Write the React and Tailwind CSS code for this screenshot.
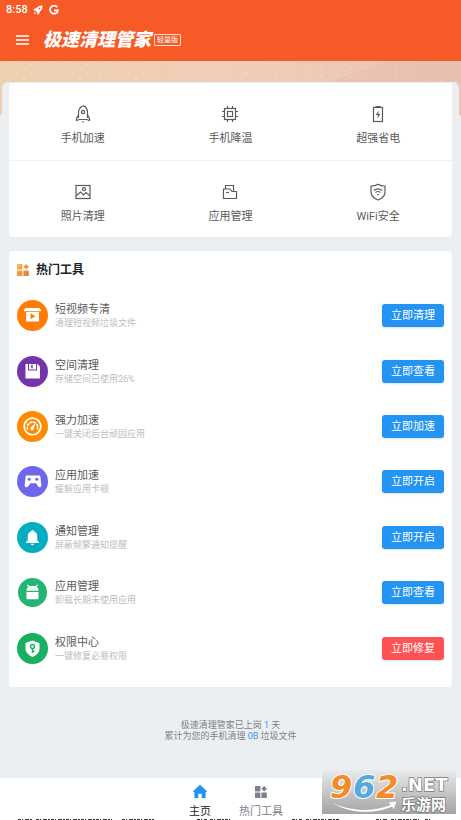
import React from 'react';

const RocketOutline = () => (
  <>
    <path d="M4.500 13V7.500C4.500 4.500 6.500 1.500 9 1s4.500 3.500 4.500 6.500V13" />
    <path d="M4.500 10 2.500 13.500v2l3-1h7l3 1v-2l-2-3.500" />
    <circle cx="9" cy="7" r="1.600" />
    <path d="M9 16.300v1.500" />
  </>
);

const ChipOutline = () => (
  <>
    <rect x="3.500" y="3.500" width="11" height="11" />
    <rect x="6.500" y="6.500" width="5" height="5" />
    <path d="M6.500 1v2.500M11.500 1v2.500M6.500 14.500V17M11.500 14.500V17M1 6.500h2.500M1 11.500h2.500M14.500 6.500H17M14.500 11.500H17" />
  </>
);

const BatteryOutline = () => (
  <>
    <rect x="4.500" y="2.500" width="9" height="14" />
    <path d="M6.500 1.500h5" />
    <path d="M9.500 5.800 6.800 10h2l-.3 3.200 2.800-4.200h-2z" fill="currentColor" stroke="none" />
  </>
);

const PhotoOutline = () => (
  <>
    <rect x="2" y="2.500" width="14" height="13" />
    <circle cx="10" cy="6.200" r="1.500" />
    <path d="m2.500 12.500 4-3.500 3 3 2.500-2.500 3.500 3" />
  </>
);

const FolderOutline = () => (
  <>
    <path d="M2.500 6v9.500h13V8.500H11L9 6z" />
    <path d="M4.500 6V2.500h8v6M5 9.500h3" />
  </>
);

const WifiShieldOutline = () => (
  <>
    <path d="M9 1.200c2 1.300 4.300 1.800 7 1.800v6c0 3.800-3 6.500-7 8-4-1.500-7-4.200-7-8V3c2.700 0 5-.5 7-1.800z" />
    <path d="M4.800 7.500c2.500-2 5.900-2 8.400 0M6.500 9.500c1.500-1.200 3.500-1.200 5 0" />
    <path d="M7.800 11h2.400L9 12.800z" fill="currentColor" stroke="none" />
  </>
);

const features = [
  { label: '手机加速', Icon: RocketOutline },
  { label: '手机降温', Icon: ChipOutline },
  { label: '超强省电', Icon: BatteryOutline },
  { label: '照片清理', Icon: PhotoOutline },
  { label: '应用管理', Icon: FolderOutline },
  { label: 'WiFi安全', Icon: WifiShieldOutline },
];

const tools = [
  {
    title: '短视频专清',
    desc: '清理短视频垃圾文件',
    action: '立即清理',
    color: '#ff7c05',
    icon: (
      <>
        <path fill="#fff" d="M8.500 8h14l1.500 2v1.200H7V10z" />
        <path fill="#fff" d="M9 12h13v9.500H9z" />
        <path fill="#ff7c05" d="m13.500 13.200 5 3-5 3z" />
      </>
    ),
  },
  {
    title: '空间清理',
    desc: '存储空间已使用26%',
    action: '立即查看',
    color: '#7235ab',
    icon: (
      <>
        <path fill="#fff" d="M8.500 8h12l2.500 2.500v12H8.500z" />
        <path fill="#7235ab" d="M11 8h9v6.500h-9z" />
        <path fill="#fff" d="M12 8h7v5.500h-7z" />
        <path fill="#7235ab" d="M14.200 8.800h1.500v3.500h-1.500z" />
      </>
    ),
  },
  {
    title: '强力加速',
    desc: '一键关闭后台顽固应用',
    action: '立即加速',
    color: '#fb8b04',
    icon: (
      <>
        <circle cx="15.500" cy="15.500" r="8.300" fill="none" stroke="#fff" strokeWidth="1.800" />
        <path fill="none" stroke="#fff" strokeWidth="1.600" d="M10.800 18.500a5.200 5.200 0 1 1 9.400 0" strokeDasharray="3 .7" />
        <path fill="#fff" d="m18.800 11.500-2 6.200a1.700 1.700 0 1 1-2.700-1.600z" />
      </>
    ),
  },
  {
    title: '应用加速',
    desc: '缓解应用卡顿',
    action: '立即开启',
    color: '#6f66ee',
    icon: (
      <>
        <path
          fill="#fff"
          d="M10 9.500h12c.9 0 1.300.5 1.400 1.300l.9 8.200c.2 2.300-1.900 3-3 1.500l-2.300-3.300h-5.500L11 20.500c-1.200 1.500-3.500.8-3.300-1.500l.9-8.200c.1-.8.5-1.300 1.400-1.300z"
        />
        <circle cx="12.200" cy="13.300" r="1.500" fill="#6f66ee" />
        <circle cx="19.800" cy="13.300" r="1.500" fill="#6f66ee" />
      </>
    ),
  },
  {
    title: '通知管理',
    desc: '屏蔽频繁通知提醒',
    action: '立即开启',
    color: '#05adc0',
    icon: (
      <path
        fill="#fff"
        d="M14.300 9.300a1.200 1.200 0 0 1 2.400 0c2.300.6 3.500 2.400 3.500 4.700v4.200l1.800 2v.8H9v-.8l1.800-2V14c0-2.300 1.200-4.100 3.500-4.700zM14 21.800h3a1.500 1.500 0 0 1-3 0z"
      />
    ),
  },
  {
    title: '应用管理',
    desc: '卸载长期未使用应用',
    action: '立即查看',
    color: '#24b573',
    radius: 14.5,
    icon: (
      <>
        <path fill="#fff" d="M9.500 13.800c0-2 .8-3.300 2-4.100L9.800 8.200l.9-.7L12.500 9h6l1.800-1.500.9.700-1.700 1.500c1.200.8 2 2.100 2 4.100z" />
        <path fill="#fff" d="M9.500 15h12v6.500a.8.8 0 0 1-.8.800H10.300a.8.8 0 0 1-.8-.8z" />
      </>
    ),
  },
  {
    title: '权限中心',
    desc: '一键修复必要权限',
    action: '立即修复',
    color: '#18af60',
    danger: true,
    icon: (
      <>
        <path fill="#fff" d="m15.500 7.500 7 2.500v5.500c0 4-3 6.800-7 8.500-4-1.700-7-4.500-7-8.500V10z" />
        <circle cx="15.500" cy="13.500" r="2" fill="none" stroke="#18af60" strokeWidth="1.400" />
        <path fill="none" stroke="#18af60" strokeWidth="1.400" d="M15.500 15.500v4.500M15.500 18.300h2" />
      </>
    ),
  },
];

const Tiles = ({ className, fill = 'currentColor' }) => (
  <svg viewBox="0 0 12 12" fill={fill} className={className} aria-hidden="true">
    <defs>
      <linearGradient id="sunset" x1="0" y1="0" x2="12" y2="12" gradientUnits="userSpaceOnUse">
        <stop offset="0" stopColor="#f7bd55" />
        <stop offset="1" stopColor="#ec7430" />
      </linearGradient>
    </defs>
    <rect x="0" y="0" width="5.400" height="5.400" rx=".5" />
    <path d="M9.200 0 12 2.700 9.200 5.400 6.400 2.700z" />
    <rect x="0" y="6.600" width="5.400" height="5.400" rx=".5" />
    <rect x="6.400" y="6.600" width="5.400" height="5.400" rx=".5" />
  </svg>
);

const Header = () => (
  <header className="h-[61px] bg-[#f55a27] text-white">
    <div className="flex h-5 items-center gap-[5px] pl-[6px] text-[11px] leading-4 font-medium">
      <span>8:58</span>
      <svg viewBox="0 0 10 10" className="size-[10px]" aria-hidden="true">
        <path fill="#fff" d="M9.500.5C6.500.3 4.500 1.500 3.300 3.300L1.200 3.700.3 5.500l1.900.1L4.400 7.800l.1 1.900 1.800-.9.400-2.100C8.500 5.500 9.700 3.500 9.500.5zM1.800 6.800.7 9.300l2.500-1.100z" />
        <circle cx="6.400" cy="3.600" r="1" fill="#f55a27" />
      </svg>
      <svg viewBox="0 0 10 10" className="ml-px size-[10px]" aria-hidden="true">
        <path fill="none" stroke="#fff" strokeWidth="1.800" d="M8.200 2.200A4 4 0 1 0 9 5.300H5.200" />
      </svg>
    </div>
    <div className="flex h-10 items-center pl-4">
      <button type="button" aria-label="菜单" className="mr-[14px]">
        <svg viewBox="0 0 13 10" className="block h-[10px] w-[13px]">
          <path stroke="#fff" strokeWidth="1.400" d="M0 1h13M0 5h13M0 9h13" />
        </svg>
      </button>
      <h1 className="text-[18px] leading-[22px] font-black italic">极速清理管家</h1>
      <span className="ml-[3px] rounded-[1px] border border-white/80 px-[2px] text-[7px] leading-[10px]">轻量版</span>
    </div>
  </header>
);

const Banner = () => (
  <div className="absolute inset-x-0 top-0 h-[54px] bg-linear-to-r from-[#edd0b0] via-[#f1cdb6] to-[#eac4b5]">
    <svg className="h-full w-full" aria-hidden="true">
      <defs>
        <pattern id="dots" width="14" height="10" patternUnits="userSpaceOnUse">
          <circle cx="3" cy="3" r="1.200" fill="#fff" opacity=".22" />
          <circle cx="10" cy="8" r="1.200" fill="#fff" opacity=".15" />
        </pattern>
      </defs>
      <rect width="34%" height="22" fill="url(#dots)" />
      <path d="M230 11 460 21M260 2l200 10" stroke="#fff" strokeWidth="1.500" strokeDasharray="2 13" opacity=".3" />
      <path d="M330 21 385 0h76v21z" fill="#dfae9f" opacity=".18" />
    </svg>
  </div>
);

const Watermark = () => (
  <svg viewBox="0 0 134 44" className="absolute -top-2 right-[5px] h-[44px] w-[134px] overflow-visible" aria-hidden="true">
    <defs>
      <linearGradient id="plate" x1="0" y1="0" x2="0" y2="1">
        <stop offset="0" stopColor="#e9eaeb" />
        <stop offset="1" stopColor="#a4a4a4" />
      </linearGradient>
    </defs>
    <rect width="134" height="44" fill="url(#plate)" />
    <g fontFamily="'DejaVu Sans', sans-serif" fontWeight="700" paintOrder="stroke" strokeLinejoin="round">
      <text y="28" fontSize="32" fontStyle="italic" stroke="#fff" strokeWidth="2">
        <tspan x="8" fill="#f48b2a">9</tspan>
        <tspan x="31" fill="#55a9df">6</tspan>
        <tspan x="54" fill="#f48b2a">2</tspan>
      </text>
      <text x="79" y="21" fontSize="18" fill="#fff" stroke="#777" strokeWidth="1.500">.NET</text>
    </g>
    <path d="M7 31c20 10 42 11 61 4l-2-3 9-1-3 9-2-3C48 46 23 43 7 31z" fill="#fff" stroke="#999" strokeWidth=".5" />
    <text
      x="79"
      y="40"
      fontSize="15"
      fontWeight="700"
      fill="#fff"
      stroke="#777"
      strokeWidth="1.500"
      paintOrder="stroke"
      fontFamily="'Noto Sans CJK SC', sans-serif"
    >
      乐游网
    </text>
  </svg>
);

const App = () => {
  return (
    <div className="flex min-h-screen flex-col bg-[#ebeff2] font-[Roboto,'Noto_Sans_CJK_SC',sans-serif] text-[#5a5a5a]">
      <Header />
      <main className="relative flex-1">
        <Banner />
        <div className="relative px-[2px] pt-[21px]">
          <div className="rounded-t-md bg-[#ebeff2] px-[7px] pt-px">
            <section className="grid grid-cols-3 overflow-hidden rounded bg-white">
              {features.map(({ label, Icon }, i) => (
                <button
                  key={label}
                  type="button"
                  className={`flex h-[77px] flex-col items-center gap-2 border-[#f2f2f2] pt-[22px] ${i > 2 ? 'border-t' : ''}`}
                >
                  <svg viewBox="0 0 18 18" className="size-[18px]" fill="none" stroke="currentColor" strokeWidth="1.200" aria-hidden="true">
                    <Icon />
                  </svg>
                  <span className="text-[11px] leading-4">{label}</span>
                </button>
              ))}
            </section>

            <section className="mt-[14px] rounded bg-white px-2 pb-[11px]">
              <h2 className="flex h-[37px] items-center gap-[7px] text-[12px] leading-4 font-bold text-[#222]">
                <Tiles className="size-3" fill="url(#sunset)" />
                热门工具
              </h2>
              <ul className="grid h-[388px] grid-rows-7">
                {tools.map((tool) => (
                  <li key={tool.title} className="flex items-center">
                    <svg viewBox="0 0 31 31" className="size-[31px]" aria-hidden="true">
                      <circle cx="15.500" cy="15.500" r={tool.radius ?? 15.5} fill={tool.color} />
                      {tool.icon}
                    </svg>
                    <div className="ml-[7px] flex-1">
                      <h3 className="text-[11px] leading-4">{tool.title}</h3>
                      <p className="text-[9px] leading-[11px] text-[#bdbdbd]">{tool.desc}</p>
                    </div>
                    <button
                      type="button"
                      className={`h-[23px] w-[62px] rounded-[3px] pt-px text-[11px] leading-4 text-white shadow-sm ${tool.danger ? 'bg-[#fe5354]' : 'bg-[#2494f2]'}`}
                    >
                      {tool.action}
                    </button>
                  </li>
                ))}
              </ul>
            </section>

            <p className="pt-[33px] text-center text-[9px] leading-[11px] text-[#7d838a]">
              极速清理管家已上岗 <span className="text-[#4a8ff0]">1</span> 天
              <br />
              累计为您的手机清理 <span className="text-[#4a8ff0]">0B</span> 垃圾文件
            </p>
          </div>
        </div>
      </main>

      <nav className="relative flex h-[42px] justify-center bg-white text-[11px] leading-4">
        <a href="#home" className="flex w-[61px] flex-col items-center gap-[5px] pt-[6px] text-[#222]">
          <svg viewBox="0 0 16 16" className="size-4" aria-hidden="true">
            <path fill="#2494f2" d="M8 .8 16 8.200h-2V15H9.800v-4.500H6.200V15H2V8.200H0z" />
          </svg>
          主页
        </a>
        <a href="#tools" className="flex w-[61px] flex-col items-center gap-[5px] pt-[6px] text-[#7c828a]">
          <span className="flex size-4 items-center justify-center">
            <Tiles className="size-3" />
          </span>
          热门工具
        </a>
        <Watermark />
        <svg className="absolute inset-x-0 bottom-0 h-px w-full" aria-hidden="true">
          <path
            d="M18 .5h14M36 .5h76M122 .5h32M197 .5h10M210 .5h22M292 .5h10M306 .5h34M376 .5h12M391 .5h28M425 .5h5"
            stroke="#333"
            strokeWidth="1"
            strokeDasharray="3 1 1 2 4 1 2 1"
          />
        </svg>
      </nav>
    </div>
  );
};

export default App;
